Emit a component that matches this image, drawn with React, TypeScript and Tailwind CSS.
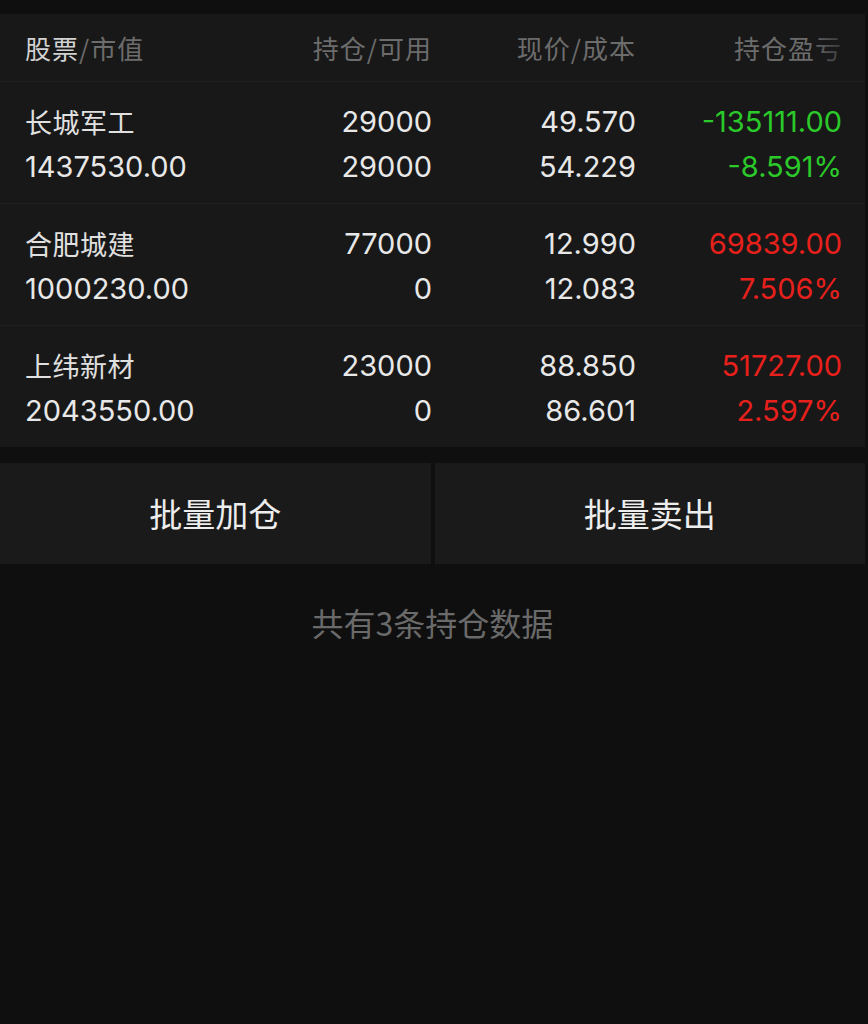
import React from 'react';

type Holding = {
  name: string;
  value: string;
  qty: string;
  avail: string;
  price: string;
  cost: string;
  pnl: string;
  pct: string;
  up: boolean;
};

const holdings: Holding[] = [
  { name: '长城军工', value: '1437530.00', qty: '29000', avail: '29000', price: '49.570', cost: '54.229', pnl: '-135111.00', pct: '-8.591%', up: false },
  { name: '合肥城建', value: '1000230.00', qty: '77000', avail: '0', price: '12.990', cost: '12.083', pnl: '69839.00', pct: '7.506%', up: true },
  { name: '上纬新材', value: '2043550.00', qty: '23000', avail: '0', price: '88.850', cost: '86.601', pnl: '51727.00', pct: '2.597%', up: true },
];

const cjk = "font-['Noto_Sans_CJK_SC',sans-serif]";
const num = "font-['Inter','Noto_Sans_CJK_SC',sans-serif]";
const cols = 'grid grid-cols-[205px_202px_204px_206px] pl-[25px] pr-[23px]';

export default function App() {
  return (
    <div className={`min-h-[1024px] bg-[#0f0f0f] pt-[14px] pr-[3px] ${cjk}`}>
      {/* Position table */}
      <div className="bg-[#181818]">
        <div className={`${cols} relative h-[68px] items-center border-b border-[#202020] text-[26px] tracking-[1px] text-[#6c6c6c]`}>
          <div>
            <span className="text-[#d2d2d2]">股票</span>/市值
          </div>
          <div className="text-right">持仓/可用</div>
          <div className="text-right">现价/成本</div>
          <div className="text-right">持仓盈亏</div>
          <div className="absolute right-0 top-0 h-full w-[56px] bg-gradient-to-r from-transparent to-[#181818]" />
        </div>

        {holdings.map((h, i) => (
          <div
            key={h.name}
            className={`${cols} pt-[17px] pb-[14px] leading-[45px] text-[29px] text-[#e8e8e8] ${i > 0 ? 'border-t border-[#202020]' : ''}`}
          >
            <div>
              <div className={`${cjk} text-[27px] tracking-[0.5px] text-[#e0e0e0]`}>{h.name}</div>
              <div className={num}>{h.value}</div>
            </div>
            <div className={`${num} text-right`}>
              <div>{h.qty}</div>
              <div>{h.avail}</div>
            </div>
            <div className={`${num} text-right`}>
              <div>{h.price}</div>
              <div>{h.cost}</div>
            </div>
            <div className={`${num} text-right ${h.up ? 'text-[#e8201c]' : 'text-[#2bc92a]'}`}>
              <div>{h.pnl}</div>
              <div>{h.pct}</div>
            </div>
          </div>
        ))}
      </div>

      {/* Batch actions */}
      <div className="mt-[16px] flex h-[101px] gap-[4px] text-[33px] text-[#ededed]">
        <button className="flex flex-1 items-center justify-center bg-[#1a1a1a]">批量加仓</button>
        <button className="flex flex-1 items-center justify-center bg-[#1a1a1a]">批量卖出</button>
      </div>

      <p className="mt-[34px] text-center text-[32px] text-[#6a6a6a]">共有3条持仓数据</p>
    </div>
  );
}
